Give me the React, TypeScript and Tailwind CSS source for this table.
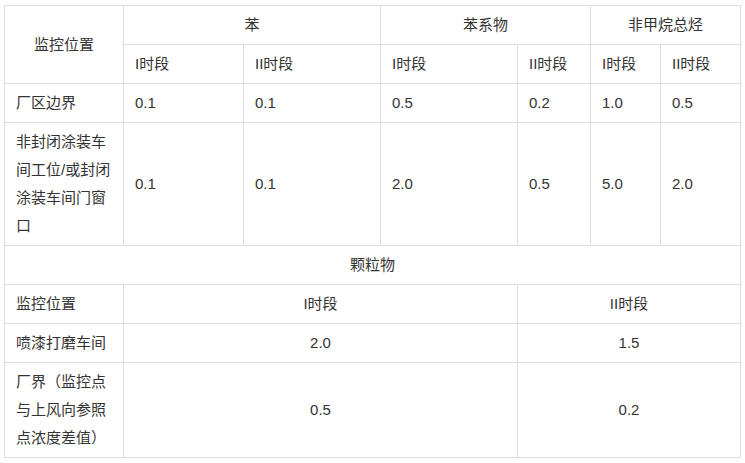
import React from "react";

const font = {
  fontFamily: "'Liberation Sans', 'Noto Sans CJK SC', sans-serif",
};

const cell = "border border-[#dddddd] px-[11px] py-[5px] leading-[28px] align-middle";

type Row = { place: string; values: string[] };

const vocRows: Row[] = [
  { place: "厂区边界", values: ["0.1", "0.1", "0.5", "0.2", "1.0", "0.5"] },
  {
    place: "非封闭涂装车间工位/或封闭涂装车间门窗口",
    values: ["0.1", "0.1", "2.0", "0.5", "5.0", "2.0"],
  },
];

const dustRows = [
  { place: "喷漆打磨车间", one: "2.0", two: "1.5" },
  { place: "厂界（监控点与上风向参照点浓度差值）", one: "0.5", two: "0.2" },
];

const widths = [119, 120, 137, 137, 73, 70, 80];

export default function App() {
  return (
    <div className="w-[745px] h-[463px] bg-white pl-[4px] pt-[5px]" style={font}>
      <table className="table-fixed border-collapse w-[737px] text-[15px] text-[#333333]">
        <colgroup>
          {widths.map((w, i) => (
            <col key={i} style={{ width: w }} />
          ))}
        </colgroup>
        <tbody>
          <tr>
            <td rowSpan={2} className={`${cell} text-center`}>监控位置</td>
            <td colSpan={2} className={`${cell} text-center`}>苯</td>
            <td colSpan={2} className={`${cell} text-center`}>苯系物</td>
            <td colSpan={2} className={`${cell} text-center`}>非甲烷总烃</td>
          </tr>
          <tr>
            {["I时段", "II时段", "I时段", "II时段", "I时段", "II时段"].map((t, i) => (
              <td key={i} className={cell}>{t}</td>
            ))}
          </tr>
          {vocRows.map((r) => (
            <tr key={r.place}>
              <td className={cell}>{r.place}</td>
              {r.values.map((v, i) => (
                <td key={i} className={cell}>{v}</td>
              ))}
            </tr>
          ))}
          <tr>
            <td colSpan={7} className={`${cell} text-center`}>颗粒物</td>
          </tr>
          <tr>
            <td className={cell}>监控位置</td>
            <td colSpan={3} className={`${cell} text-center`}>I时段</td>
            <td colSpan={3} className={`${cell} text-center`}>II时段</td>
          </tr>
          {dustRows.map((r) => (
            <tr key={r.place}>
              <td className={cell}>{r.place}</td>
              <td colSpan={3} className={`${cell} text-center`}>{r.one}</td>
              <td colSpan={3} className={`${cell} text-center`}>{r.two}</td>
            </tr>
          ))}
        </tbody>
      </table>
    </div>
  );
}
